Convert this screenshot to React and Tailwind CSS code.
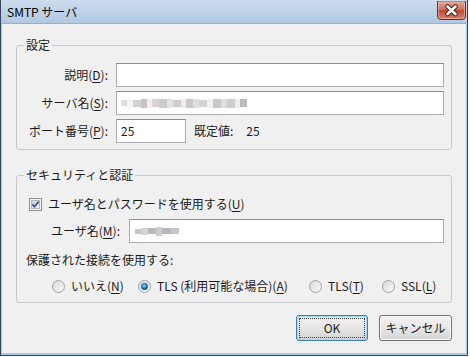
import React from "react";

const font = "font-['Noto_Sans_CJK_JP','Noto_Sans',sans-serif]";

const U = ({ children }) => <span className="underline underline-offset-[2px] decoration-[1px]">{children}</span>;

const CloseButton = () => (
  <svg width="29" height="19" viewBox="0 0 29 19">
    <defs>
      <linearGradient id="cb" x1="0" y1="0" x2="0" y2="1">
        <stop offset="0" stopColor="#e9a99b" />
        <stop offset="0.45" stopColor="#d0725f" />
        <stop offset="0.5" stopColor="#c2432f" />
        <stop offset="1" stopColor="#d9826c" />
      </linearGradient>
    </defs>
    <path d="M0.5 0 H28.5 V15 Q28.5 18.5 25 18.5 H4 Q0.5 18.5 0.5 15 Z" fill="url(#cb)" stroke="#6b2a22" />
    <path d="M1.5 1 H27.5 V14.5 Q27.5 17.5 24.5 17.5 H4.5 Q1.5 17.5 1.5 14.5 Z" fill="none" stroke="#f3c6bc" strokeOpacity="0.6" />
    <path d="M10.5 5.5 L18.5 13 M18.5 5.5 L10.5 13" stroke="#4a1c16" strokeWidth="4.6" strokeLinecap="round" />
    <path d="M10.5 5.5 L18.5 13 M18.5 5.5 L10.5 13" stroke="#ffffff" strokeWidth="2.6" strokeLinecap="round" />
  </svg>
);

const Checkbox = () => (
  <svg width="13" height="13" viewBox="0 0 13 13" className="shrink-0">
    <defs>
      <linearGradient id="ck" x1="0" y1="0" x2="1" y2="1">
        <stop offset="0" stopColor="#cbcfd5" />
        <stop offset="1" stopColor="#f6f6f6" />
      </linearGradient>
    </defs>
    <rect x="0.5" y="0.5" width="12" height="12" fill="#f4f4f4" stroke="#8e8f8f" />
    <rect x="2.5" y="2.5" width="8" height="8" fill="url(#ck)" stroke="#b4b7bc" />
    <path d="M3.3 6.3 L5.5 8.8 L9.7 3.6" fill="none" stroke="#3b4f86" strokeWidth="1.7" />
  </svg>
);

const Radio = ({ on }) => (
  <svg width="13" height="13" viewBox="0 0 13 13" className="shrink-0">
    <defs>
      <linearGradient id="rd" x1="0" y1="0" x2="1" y2="1">
        <stop offset="0" stopColor="#d4d6d9" />
        <stop offset="1" stopColor="#fbfbfb" />
      </linearGradient>
      <radialGradient id="rs" cx="0.45" cy="0.4" r="0.6">
        <stop offset="0" stopColor="#9fdcfb" />
        <stop offset="0.5" stopColor="#2d86c8" />
        <stop offset="1" stopColor="#123d6b" />
      </radialGradient>
    </defs>
    <circle cx="6.5" cy="6.5" r="6" fill="url(#rd)" stroke="#a0a0a0" />
    {on && <circle cx="6.5" cy="6.5" r="3.4" fill="url(#rs)" />}
  </svg>
);

const TextBox = ({ className = "", children }) => (
  <div className={`h-[24px] bg-white border border-[#abadb3] border-t-[#8a8d94] flex items-center pl-[4px] ${className}`}>
    {children}
  </div>
);

const Blur = ({ blocks }) => (
  <div className="flex items-center blur-[0.6px]">
    {blocks.map(([w, c, h], i) => (
      <div key={i} style={{ width: w, height: h || 9, background: c }} />
    ))}
  </div>
);

const serverBlocks = [
  [6, "#dcdcdc", 6], [6, "#f4f4f4"], [8, "#d6d0d2", 7], [6, "#c9c2c6"], [5, "#f0f0f0"], [7, "#d9d2cd", 8],
  [8, "#cbcbcb"], [6, "#e3e3e3"], [8, "#d2cccc", 7], [5, "#ededed"], [7, "#cfc7c9"], [6, "#e1dcdc"],
  [8, "#d3d3d3", 7], [6, "#f0f0f0"], [8, "#ccc6c8"], [6, "#dedede"], [8, "#d4cbcb"], [5, "#eeeeee"], [7, "#c1b8bd", 8],
];

const userBlocks = [
  [6, "#c8c4c6", 5], [7, "#d7d4d6", 7], [8, "#bdb7bb", 6], [6, "#cfcad3", 9], [9, "#b9b4bd", 6], [8, "#c8c4c8", 6],
];

export default function App() {
  return (
    <div className={`w-[470px] h-[357px] bg-white text-[12px] leading-[16px] text-[#1a1a1a] ${font}`}>
      <div className="w-[468px] h-[356px] flex flex-col bg-[#a8c8e6] border-l border-r border-b border-[#33465c]">
        {/* title bar */}
        <div className="h-[23px] flex items-start justify-between pl-[6px] pr-[1px] bg-gradient-to-b from-[#cddcee] to-[#b1c8e2]">
          <span className="mt-[4px] text-black">SMTP サーバ</span>
          <div className="mt-[1px]">
            <CloseButton />
          </div>
        </div>

        {/* client area */}
        <div className="flex-1 mx-[1px] mb-[2px] bg-[#f0f0f0] border-t border-[#98b1cb] px-[14px] pt-[13px] flex flex-col">
          <fieldset className="border border-[#c7c9cc] rounded-[3px] pr-[7px] pb-[6px]">
            <legend className="ml-[7px] px-[2px]">設定</legend>
            <div className="flex flex-col gap-[4px] mt-[10px]">
              <div className="flex items-center">
                <span className="w-[91px] text-right">説明(<U>D</U>):</span>
                <TextBox className="ml-[8px] flex-1" />
              </div>
              <div className="flex items-center">
                <span className="w-[91px] text-right">サーバ名(<U>S</U>):</span>
                <TextBox className="ml-[8px] flex-1">
                  <Blur blocks={serverBlocks} />
                </TextBox>
              </div>
              <div className="flex items-center">
                <span className="w-[91px] text-right">ポート番号(<U>P</U>):</span>
                <TextBox className="ml-[8px] w-[70px]">25</TextBox>
                <span className="ml-[8px]">既定値:</span>
                <span className="ml-[13px]">25</span>
              </div>
            </div>
          </fieldset>

          <fieldset className="mt-[17px] border border-[#c7c9cc] rounded-[3px] pr-[7px] pb-[8px]">
            <legend className="ml-[7px] px-[2px]">セキュリティと認証</legend>
            <div className="flex items-center mt-[13px] ml-[12px] gap-[6px]">
              <Checkbox />
              <span>ユーザ名とパスワードを使用する(<U>U</U>)</span>
            </div>
            <div className="flex items-center mt-[7px]">
              <span className="w-[103px] text-right">ユーザ名(<U>M</U>):</span>
              <TextBox className="ml-[9px] flex-1">
                <div className="ml-[1px]">
                  <Blur blocks={userBlocks} />
                </div>
              </TextBox>
            </div>
            <div className="mt-[9px] ml-[9px]">保護された接続を使用する:</div>
            <div className="flex items-center mt-[10px] ml-[35px]">
              <div className="w-[86px] flex items-center gap-[6px]">
                <Radio />
                <span>いいえ(<U>N</U>)</span>
              </div>
              <div className="w-[171px] flex items-center gap-[6px]">
                <Radio on />
                <span>TLS (利用可能な場合)(<U>A</U>)</span>
              </div>
              <div className="w-[73px] flex items-center gap-[6px]">
                <Radio />
                <span>TLS(<U>T</U>)</span>
              </div>
              <div className="flex items-center gap-[6px]">
                <Radio />
                <span>SSL(<U>L</U>)</span>
              </div>
            </div>
          </fieldset>

          <div className="flex justify-end gap-[11px] mt-[12px]">
            <button className="w-[72px] h-[26px] rounded-[3px] border border-[#3c7fb1] shadow-[inset_0_0_0_1px_#9fd8f7] bg-gradient-to-b from-[#f2f2f2] via-[#e6e6e6] to-[#d2d2d2] p-[2px]">
              <div className="w-full h-full border border-dotted border-[#3a3a3a] flex items-center justify-center">OK</div>
            </button>
            <button className="w-[73px] h-[26px] rounded-[3px] border border-[#707070] shadow-[inset_0_0_0_1px_#fbfbfb] bg-gradient-to-b from-[#f2f2f2] via-[#e8e8e8] to-[#d4d4d4] flex items-center justify-center">
              キャンセル
            </button>
          </div>
        </div>
      </div>
    </div>
  );
}
